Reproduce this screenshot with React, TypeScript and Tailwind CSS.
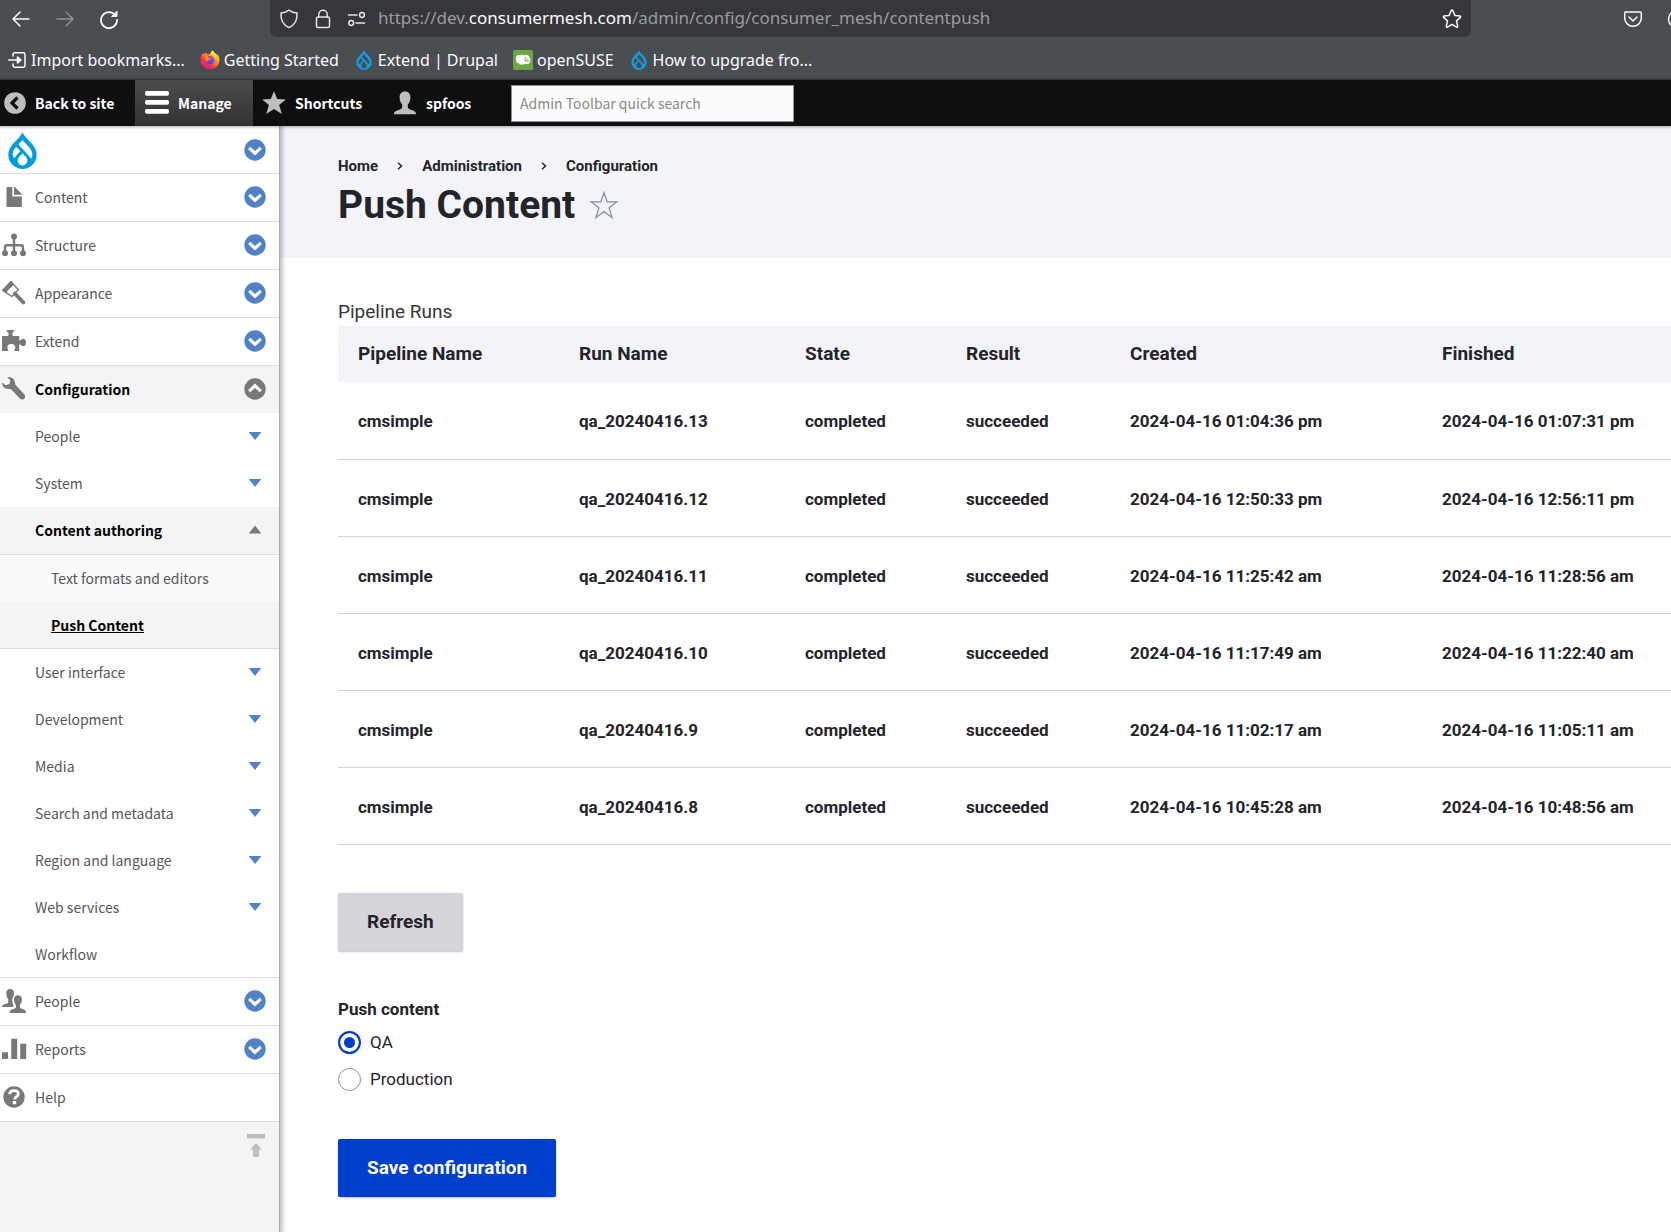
import { useState, type ReactNode } from "react";
import { SiDrupal } from "react-icons/si";

const UI_FONT = "font-['Noto_Sans',sans-serif]";
const TRAY_FONT = "font-['Noto_Sans_CJK_SC',sans-serif]";
const PAGE_FONT = "font-['Roboto',sans-serif]";

type IconName =
  | "content"
  | "structure"
  | "appearance"
  | "extend"
  | "configuration"
  | "people"
  | "reports"
  | "help";

type Toggle = "circle" | "circleOpen" | "arrow" | "arrowOpen" | "none";

type MenuItem = {
  id: string;
  label: string;
  icon?: IconName;
  level: 1 | 2 | 3;
  toggle: Toggle;
  active?: boolean;
  lastOfGroup?: boolean;
};

const MENU: MenuItem[] = [
  { id: "content", label: "Content", icon: "content", level: 1, toggle: "circle" },
  { id: "structure", label: "Structure", icon: "structure", level: 1, toggle: "circle" },
  { id: "appearance", label: "Appearance", icon: "appearance", level: 1, toggle: "circle" },
  { id: "extend", label: "Extend", icon: "extend", level: 1, toggle: "circle" },
  { id: "config", label: "Configuration", icon: "configuration", level: 1, toggle: "circleOpen", active: true },
  { id: "config-people", label: "People", level: 2, toggle: "arrow" },
  { id: "system", label: "System", level: 2, toggle: "arrow" },
  { id: "authoring", label: "Content authoring", level: 2, toggle: "arrowOpen", active: true },
  { id: "formats", label: "Text formats and editors", level: 3, toggle: "none" },
  { id: "push", label: "Push Content", level: 3, toggle: "none", active: true, lastOfGroup: true },
  { id: "ui", label: "User interface", level: 2, toggle: "arrow" },
  { id: "development", label: "Development", level: 2, toggle: "arrow" },
  { id: "media", label: "Media", level: 2, toggle: "arrow" },
  { id: "search", label: "Search and metadata", level: 2, toggle: "arrow" },
  { id: "region", label: "Region and language", level: 2, toggle: "arrow" },
  { id: "services", label: "Web services", level: 2, toggle: "arrow" },
  { id: "workflow", label: "Workflow", level: 2, toggle: "none", lastOfGroup: true },
  { id: "people", label: "People", icon: "people", level: 1, toggle: "circle" },
  { id: "reports", label: "Reports", icon: "reports", level: 1, toggle: "circle" },
  { id: "help", label: "Help", icon: "help", level: 1, toggle: "none" },
];

const RUNS = [
  { run: "qa_20240416.13", created: "2024-04-16 01:04:36 pm", finished: "2024-04-16 01:07:31 pm" },
  { run: "qa_20240416.12", created: "2024-04-16 12:50:33 pm", finished: "2024-04-16 12:56:11 pm" },
  { run: "qa_20240416.11", created: "2024-04-16 11:25:42 am", finished: "2024-04-16 11:28:56 am" },
  { run: "qa_20240416.10", created: "2024-04-16 11:17:49 am", finished: "2024-04-16 11:22:40 am" },
  { run: "qa_20240416.9", created: "2024-04-16 11:02:17 am", finished: "2024-04-16 11:05:11 am" },
  { run: "qa_20240416.8", created: "2024-04-16 10:45:28 am", finished: "2024-04-16 10:48:56 am" },
];

function Line({ children, className = "size-5", width = 1.5 }: { children: ReactNode; className?: string; width?: number }) {
  return (
    <svg
      viewBox="0 0 20 20"
      fill="none"
      stroke="currentColor"
      strokeWidth={width}
      strokeLinecap="round"
      strokeLinejoin="round"
      aria-hidden="true"
      className={`shrink-0 ${className}`}
    >
      {children}
    </svg>
  );
}

function FirefoxLogo() {
  return (
    <svg viewBox="0 0 20 20" aria-hidden="true" className="size-5 shrink-0">
      <defs>
        <linearGradient id="fx-body" x1="0.85" y1="0.1" x2="0.2" y2="0.95">
          <stop offset="0" stopColor="#fff44f" />
          <stop offset="0.35" stopColor="#ff980e" />
          <stop offset="0.7" stopColor="#ff3647" />
          <stop offset="1" stopColor="#e31587" />
        </linearGradient>
        <linearGradient id="fx-globe" x1="0.8" y1="0" x2="0.2" y2="1">
          <stop offset="0" stopColor="#a04bdb" />
          <stop offset="1" stopColor="#5b3fc4" />
        </linearGradient>
      </defs>
      <path
        fill="url(#fx-body)"
        d="M12.8.4c-1.600 1-2.200 2.400-2.300 3.600-1-.1-1.900.1-2.700.5-1-.4-1.500-1.300-1.600-1.900-.9.4-1.500 1-1.900 1.600-.7-.2-1-.7-1-1.500C1.600 4.300.7 6.700.6 9.200c-.3 5.500 4 10 9.400 10s9.500-4.200 9.500-9.500c0-2.300-1-4.600-2.300-5.700.3.800.4 1.400.4 2-.9-2.200-3.700-3.300-4.800-5.600z"
      />
      <circle cx="10.200" cy="10.200" r="4.300" fill="url(#fx-globe)" />
      <path fill="#ff8a16" d="M4.600 6.600c2-.4 3.400.1 4.200 1.300 1.100-.1 1.900.1 2.300.6-.4 1-1.600 1-2.500 1.500-.8.4-.6 1.400-.2 2-2.300-.3-3.800-2.700-3.800-5.400z" />
      <path fill="#ffe14a" d="M12.800.4c-1.600 1-2.200 2.400-2.300 3.600 2.500.1 4.600 1.800 5 4.300.5-.7.700-1.500.7-2.300C15.300 3.800 13.600 2.400 12.800.4z" />
    </svg>
  );
}

function SuseLogo() {
  return (
    <svg viewBox="0 0 20 20" aria-hidden="true" className="size-5 shrink-0">
      <rect width="20" height="20" rx="1.500" fill="#6da741" />
      <path fill="#fff" d="M3 7.200C3.500 5.200 5.500 4.600 8 4.700c2 .1 3 .4 4.500.9L12 4.200c2.300.7 5 2 5.400 4.700.3 2-.2 3.500-.9 4.400-.8.900-3 .8-4.300.5-.9.700-1.700 1.100-2.700.6H6.600c-.5-.4-.8-.8-.7-1.400H4c-.8-1.800-1.400-4-1-5.800z" />
      <path fill="none" stroke="#6da741" strokeWidth="0.900" d="M16.800 10.800c-2.200.9-4.300.7-5.300-.3M13.200 7.200a1.500 1.500 0 1 0 1.600 1.600" />
    </svg>
  );
}

function BrowserChrome() {
  return (
    <header className={`${UI_FONT} border-b border-[#404345] bg-[#4a4d51] text-[#fbfbfe]`}>
      <div className="flex h-[37px] items-center">
        <div className="flex w-[270px] shrink-0 items-center gap-6 pl-[11px]">
          <button type="button" aria-label="Back">
            <Line>
              <path d="M18 10H2M9 3 2 10l7 7" />
            </Line>
          </button>
          <button type="button" aria-label="Forward" disabled className="text-[#8d8f92]">
            <Line>
              <path d="M2 10h16M11 3l7 7-7 7" />
            </Line>
          </button>
          <button type="button" aria-label="Reload">
            <Line width={1.8}>
              <path d="M16.500 6.500A8 8 0 1 0 18 11" />
              <path d="M18 2.500v5h-5z" fill="currentColor" strokeWidth={1} />
            </Line>
          </button>
        </div>
        <div className="flex h-full min-w-0 flex-1 items-center rounded-b-md bg-[#36373b] pr-[9px] pl-[9px]">
          <div className="flex shrink-0 items-center gap-[14px] pr-[11px] text-[#e4e4e7]">
            <Line>
              <path d="M10 1.200c2.300 1.700 5 2.700 8 2.900.5 6.600-2.500 12-8 14.500C4.500 16.100 1.500 10.700 2 4.100c3-.2 5.700-1.200 8-2.900z" />
            </Line>
            <Line>
              <rect x="3.500" y="8" width="13" height="10.500" rx="1.500" />
              <path d="M5.800 8V5.500a4.200 4.200 0 0 1 8.400 0V8" />
            </Line>
            <Line>
              <path d="M1.500 6h8.500M9 14h8.500" />
              <circle cx="15" cy="6" r="2.400" />
              <circle cx="4.200" cy="14" r="2.400" />
            </Line>
          </div>
          <div
            role="textbox"
            aria-label="Address"
            className="min-w-0 flex-1 truncate pb-0.5 text-[17px] leading-6 text-[#9b9b9f]"
          >
            https://dev.<span className="text-[#fbfbfe]">consumermesh.com</span>/admin/config/consumer_mesh/contentpush
          </div>
          <button type="button" aria-label="Bookmark this page">
            <Line>
              <path d="M9.200 1.600c.3-.7 1.300-.7 1.600 0l2.100 4.800 5 .5c.8.1 1.100 1 .5 1.500l-3.900 3.500 1.200 5.300c.2.800-.6 1.300-1.200.9L10 15.400l-4.500 2.700c-.7.400-1.400-.1-1.200-.9l1.200-5.300-3.900-3.500c-.6-.5-.3-1.400.5-1.500l5-.5z" />
            </Line>
          </button>
        </div>
        <div className="flex w-[200px] shrink-0 items-center gap-6 overflow-hidden pl-[152px]">
          <button type="button" aria-label="Save to Pocket">
            <Line>
              <path d="M2.500 3h15c.5 0 .8.400.8.900V9a8.300 8.300 0 0 1-16.600 0V3.900c0-.5.300-.9.800-.9z" />
              <path d="M6 8l4 4 4-4" />
            </Line>
          </button>
          <button type="button" aria-label="Account">
            <Line>
              <circle cx="10" cy="10" r="8.500" />
            </Line>
          </button>
        </div>
      </div>
      <nav aria-label="Bookmarks" className="flex h-[42px] items-center gap-[15px] pt-1 pl-2 text-base leading-6">
        <a href="#import" className="flex items-center gap-[3px]">
          <Line>
            <path d="M5 6V4.500C5 3.500 5.700 2.800 6.700 2.800h8.600c1 0 1.700.7 1.700 1.700v11c0 1-.7 1.700-1.700 1.700H6.700c-1 0-1.700-.7-1.700-1.700V14M.8 10H12" />
            <path d="M9.500 7l3.500 3-3.500 3z" fill="currentColor" />
          </Line>
          Import bookmarks...
        </a>
        <a href="#started" className="flex items-center gap-1">
          <FirefoxLogo />
          Getting Started
        </a>
        <a href="#extend" className="flex items-center gap-1">
          <SiDrupal aria-hidden="true" className="size-5 text-[#0d9de0]" />
          Extend | Drupal
        </a>
        <a href="#opensuse" className="flex items-center gap-1">
          <SuseLogo />
          openSUSE
        </a>
        <a href="#upgrade" className="flex items-center gap-1">
          <SiDrupal aria-hidden="true" className="size-5 text-[#0d9de0]" />
          How to upgrade fro...
        </a>
      </nav>
    </header>
  );
}

function AdminToolbar() {
  const item = "flex h-full items-center text-white";
  return (
    <nav
      aria-label="Toolbar"
      className={`${TRAY_FONT} relative z-20 flex h-[46px] items-center bg-[#0f0f0f] text-sm font-bold shadow-[0_0_3px_1px_rgba(0,0,0,0.33)]`}
    >
      <a href="#site" className={`${item} w-[135px] gap-[9px] pl-1`}>
        <svg viewBox="0 0 22 22" aria-hidden="true" className="size-[22px] shrink-0">
          <circle cx="11" cy="11" r="10.800" fill="#bebebe" />
          <path d="M13.500 5.500 8 11l5.500 5.500" fill="none" stroke="#0f0f0f" strokeWidth="3.200" />
        </svg>
        Back to site
      </a>
      <a href="#manage" className={`${item} w-[118px] gap-[9px] bg-linear-to-b from-[#4c4c4c] to-[#333] pl-[10px]`}>
        <svg viewBox="0 0 24 24" aria-hidden="true" className="size-6 shrink-0" fill="#fff">
          <rect y="0" width="24" height="4.800" rx="1.800" />
          <rect y="9" width="24" height="4.800" rx="1.800" />
          <rect y="18" width="24" height="4.800" rx="1.800" />
        </svg>
        Manage
      </a>
      <a href="#shortcuts" className={`${item} w-[130px] gap-[9px] pl-[9px]`}>
        <svg viewBox="0 0 24 24" aria-hidden="true" className="size-6 shrink-0" fill="#bebebe">
          <path d="m12 .2 3.200 7.800 8.600.5-6.700 5.500 2.700 9L12 18.100l-7.800 4.900 2.700-9L.2 8.500 8.800 8z" />
        </svg>
        Shortcuts
      </a>
      <a href="#user" className={`${item} w-[128px] gap-[9px] pl-[10px]`}>
        <svg viewBox="0 0 24 24" aria-hidden="true" className="size-6 shrink-0" fill="#bebebe">
          <path d="M12 .5c3.600 0 5.400 2.300 5.400 5.800 0 3-1 5.600-2.600 7.200v2.700c0 1.400 1.400 2 3.900 2.800 2.700.9 4.300 1.900 4.300 3.500v.8H1v-.8c0-1.600 1.600-2.600 4.300-3.500 2.500-.8 3.900-1.400 3.900-2.800v-2.700C7.600 11.900 6.600 9.300 6.600 6.300 6.600 2.800 8.400.5 12 .5z" />
        </svg>
        spfoos
      </a>
      <input
        type="search"
        aria-label="Admin Toolbar quick search"
        placeholder="Admin Toolbar quick search"
        className="h-[37px] w-[283px] border border-[#8f8f9d] bg-[#fcfcfa] px-2 font-normal text-black placeholder:text-[#8a8a8a]"
      />
    </nav>
  );
}

function MenuIcon({ name }: { name: IconName }) {
  const shapes: Record<IconName, ReactNode> = {
    content: (
      <path d="M4.500 2h5.800v9.500h9.500V22H4.500zM12 2h.8l7 7v.800H12z" />
    ),
    structure: (
      <>
        <circle cx="12" cy="3.500" r="3" />
        <circle cx="3" cy="20.300" r="3" />
        <circle cx="12" cy="20.300" r="3" />
        <circle cx="21" cy="20.300" r="3" />
        <path d="M12 3v17M3 20v-5.500c0-1.500.8-2.200 2.200-2.200h13.600c1.400 0 2.200.7 2.200 2.200V20" fill="none" stroke="currentColor" strokeWidth="2.400" />
      </>
    ),
    appearance: (
      <>
        <path d="M9 .8 16.300 8.800 9.800 15.500.8 9.300z" fill="none" stroke="currentColor" strokeWidth="1.400" strokeLinejoin="round" />
        <path d="M9 0 0 9.300l4.500 3.200C5.300 8.500 9 7.300 10.300 5.300c.6-.9.900-1.900 1-2.800z" />
        <path d="m12.800 12.500 8.700 9" fill="none" stroke="currentColor" strokeWidth="3.800" strokeLinecap="round" />
      </>
    ),
    extend: (
      <path d="M4.500 1h7.500c.3 1.800-1.800 2.200-1.800 3.800 0 1 .4 1.700.8 2.200h6.200v4.500c1.600.6 2.300-1.800 4.300-1.800 1.400 0 2.500 1.800 2.500 3.800s-1.100 3.800-2.500 3.800c-2 0-2.700-2.400-4.300-1.800V22h-4.700c-.8-1 .8-2 .8-3.800 0-2-1.800-3.200-4-3.200s-4 1.200-4 3.200C5.300 20 7 21 6.200 22H0V7h6c.4-.5.700-1.200.7-2.200C6.700 3.200 4.200 2.800 4.500 1z" />
    ),
    configuration: (
      <path d="M5.200.6c3.600-1 7.200 1 7.800 4.700.2 1.300.1 2 .6 2.700l8.800 9.400c1.200 1.400.9 3.300-.2 4.400-1.200 1.100-3 1.100-4.300-.2l-8.700-9c-.7-.7-1.500-.6-2.700-.6C2.900 11.900 0 9.300 0 5.500L3.700 8.300 7.500 7l.9-3.800z" />
    ),
    people: (
      <>
        <path d="M8.200 0c2.600 0 3.900 1.700 3.900 4.300 0 1-.2 1.900-.5 2.700-1.200 1.300-1.600 3.600-1.200 5.900.3 1.800 1 3 1.700 4L9.500 18H0c0-1.500 1-2.300 3-2.900 2-.6 3.200-1 3.200-2.200V10C5 8.800 4.300 6.800 4.300 4.500 4.300 1.700 5.600 0 8.200 0z" />
        <path d="M15.900 6.200c2.600 0 4 1.700 4 4.400 0 2.300-.8 4.200-2 5.400v2c0 1.200 1 1.700 3 2.300 1.900.6 3.100 1.300 3.100 2.900v.8H7.800v-.8c0-1.600 1.200-2.300 3.100-2.900 2-.6 3-1.100 3-2.300v-2c-1.200-1.200-2-3.100-2-5.400 0-2.700 1.400-4.400 4-4.400z" />
      </>
    ),
    reports: (
      <path d="M0 15.200h6V22H0zM9.200 1.800h6V22h-6zM18.200 6.800h6V22h-6z" />
    ),
    help: (
      <>
        <circle cx="12" cy="12" r="10.700" />
        <path d="M7.700 9.300C7.700 7 9.300 5.700 12 5.700s4.300 1.300 4.300 3.400c0 2.500-3.600 2.700-3.600 5.300" fill="none" stroke="#fff" strokeWidth="2.800" />
        <path d="M10.800 16h3.400v3.200h-3.400z" fill="#fff" />
      </>
    ),
  };
  return (
    <svg viewBox="0 0 24 24" aria-hidden="true" fill="currentColor" className="size-6 shrink-0 overflow-visible text-[#787878]">
      {shapes[name]}
    </svg>
  );
}

function ToggleIcon({ kind }: { kind: Toggle }) {
  if (kind === "circle" || kind === "circleOpen") {
    const open = kind === "circleOpen";
    return (
      <svg viewBox="0 0 22 22" aria-hidden="true" className="size-[22px]">
        <circle cx="11" cy="11" r="10.700" fill={open ? "#787878" : "#5181c6"} />
        <path d={open ? "m5.200 13.200 5.800-5.400 5.800 5.400" : "m5.200 8.800 5.800 5.400 5.800-5.400"} fill="none" stroke="#fff" strokeWidth="3.200" />
      </svg>
    );
  }
  return (
    <svg viewBox="0 0 22 22" aria-hidden="true" className="size-[22px]">
      {kind === "arrowOpen" ? <path d="M11 6.500l6.300 8H4.700z" fill="#787878" /> : <path d="M4.700 7h12.600L11 15z" fill="#5181c6" />}
    </svg>
  );
}

function rowClass(item: MenuItem) {
  if (item.level === 1) {
    return item.active ? "h-[47px] bg-[#f4f4f4]" : "h-12 border-b border-[#ddd] bg-white";
  }
  if (item.level === 3) {
    return item.active ? "h-[47px] border-b border-[#ddd] bg-[#f4f4f4]" : "h-[47px] bg-[#fafafa]";
  }
  if (item.active) return "h-12 border-b border-[#ddd] bg-[#f4f4f4]";
  return item.lastOfGroup ? "h-[47px] border-b border-[#ddd] bg-white" : "h-[47px] bg-white";
}

function labelClass(item: MenuItem) {
  if (item.level === 3) {
    return item.active ? "pl-[51px] font-bold text-black underline" : "pl-[51px] text-[#565656]";
  }
  return item.active ? "font-bold text-black" : "text-[#565656]";
}

function AdminTray() {
  return (
    <aside className={`${TRAY_FONT} relative z-10 w-[280px] shrink-0 border-r border-[#aaa] bg-[#f4f4f4] text-sm shadow-[0_0_5px_2px_rgba(0,0,0,0.3)]`}>
      <ul>
        <li className="flex h-12 items-center justify-between border-b border-[#ddd] bg-white pr-[13px]">
          <a href="#tools" aria-label="Tools" className="pt-0.5 pl-1">
            <SiDrupal aria-hidden="true" className="size-[37px] text-[#009cde]" />
          </a>
          <button type="button" aria-label="Extend Tools">
            <ToggleIcon kind="circle" />
          </button>
        </li>
        {MENU.map((item) => (
          <li key={item.id} className={`flex items-center justify-between pr-[13px] pb-px ${rowClass(item)}`}>
            <a href={`#${item.id}`} className="flex items-center">
              {item.level < 3 ? <span className="flex w-[35px] shrink-0 pl-[2px]">{item.icon ? <MenuIcon name={item.icon} /> : null}</span> : null}
              <span className={labelClass(item)}>{item.label}</span>
            </a>
            {item.toggle !== "none" ? (
              <button type="button" aria-label={`Toggle ${item.label}`}>
                <ToggleIcon kind={item.toggle} />
              </button>
            ) : null}
          </li>
        ))}
      </ul>
      <div className="flex justify-end pt-3 pr-[14px]">
        <button type="button" aria-label="Horizontal orientation">
          <svg viewBox="0 0 18 24" aria-hidden="true" className="h-6 w-[18px]" fill="#bebebe">
            <path d="M0 0h18v4.500H0zM9 9l6 6.500h-3V23H6v-7.500H3z" />
          </svg>
        </button>
      </div>
    </aside>
  );
}

function Separator() {
  return (
    <svg viewBox="0 0 6 8" aria-hidden="true" className="h-2 w-[6px]" fill="none" stroke="#232429" strokeWidth="1.500">
      <path d="m1 .8 3.500 3.200L1 7.200" />
    </svg>
  );
}

const RADIO_CLS =
  "size-[23px] appearance-none rounded-full border border-[#8e929c] bg-white checked:border-2 checked:border-[#003ecc] checked:bg-[#003ecc] checked:shadow-[inset_0_0_0_4px_#fff]";

function PushContentPage() {
  const [target, setTarget] = useState("qa");

  return (
    <main className={`${PAGE_FONT} min-w-0 flex-1 overflow-hidden bg-white text-[#232429]`}>
      <div className="h-[132px] bg-[#f3f4f9] pt-[29px] pl-[58px]">
        <nav aria-label="Breadcrumb" className="flex items-center gap-[19px] text-[15px] leading-[22px] font-bold">
          <a href="#home">Home</a>
          <Separator />
          <a href="#administration">Administration</a>
          <Separator />
          <a href="#configuration">Configuration</a>
        </nav>
        <div className="flex items-center gap-[14px] pt-[3px]">
          <h1 className="text-[39px] leading-[50px] font-bold">Push Content</h1>
          <button type="button" aria-label="Add to shortcuts">
            <svg viewBox="0 0 30 30" aria-hidden="true" className="size-[30px]" fill="none" stroke="#8e929c" strokeWidth="1.300">
              <path d="m15 2.500 3.100 9.300h9.800l-7.900 5.900 3.100 9.800-8.100-5.900-8.100 5.900 3.100-9.800-7.900-5.900h9.800z" />
            </svg>
          </button>
        </div>
      </div>

      <form className="pt-10 pb-9 pl-[58px]" onSubmit={(event) => event.preventDefault()}>
        <table className="w-full min-w-[1333px] table-fixed border-collapse text-left">
          <caption className="h-7 text-left text-[19px] leading-7 text-[#33353b]">Pipeline Runs</caption>
          <colgroup>
            <col className="w-[221px]" />
            <col className="w-[226px]" />
            <col className="w-[161px]" />
            <col className="w-[164px]" />
            <col className="w-[312px]" />
            <col />
          </colgroup>
          <thead>
            <tr className="h-14 bg-[#f3f4f9] text-[19px] leading-6">
              <th scope="col" className="pl-5 font-bold">Pipeline Name</th>
              <th scope="col" className="pl-5 font-bold">Run Name</th>
              <th scope="col" className="pl-5 font-bold">State</th>
              <th scope="col" className="pl-5 font-bold">Result</th>
              <th scope="col" className="pl-5 font-bold">Created</th>
              <th scope="col" className="pl-5 font-bold">Finished</th>
            </tr>
          </thead>
          <tbody>
            {RUNS.map((row) => (
              <tr key={row.run} className="h-[77px] border-b border-[#d3d4d9] text-[17px] leading-6 font-bold">
                <td className="pt-0.5 pl-5">cmsimple</td>
                <td className="pt-0.5 pl-5">{row.run}</td>
                <td className="pt-0.5 pl-5">completed</td>
                <td className="pt-0.5 pl-5">succeeded</td>
                <td className="pt-0.5 pl-5">{row.created}</td>
                <td className="pt-0.5 pl-5">{row.finished}</td>
              </tr>
            ))}
          </tbody>
        </table>

        <button type="button" className="mt-12 flex h-[58px] items-center rounded-xs bg-[#d4d4da] px-[29px] text-[19px] leading-6 font-bold shadow-[0_1px_2px_rgba(0,0,0,0.25)]">
          Refresh
        </button>

        <fieldset className="pt-[46px] text-[17px] leading-6">
          <legend className="float-left mb-px w-full font-bold">Push content</legend>
          <label className="flex h-[37px] w-fit clear-both items-center gap-[9px] pt-1">
            <input
              type="radio"
              name="target"
              value="qa"
              checked={target === "qa"}
              onChange={() => setTarget("qa")}
              className={RADIO_CLS}
            />
            QA
          </label>
          <label className="flex h-[37px] w-fit items-center gap-[9px] pt-1">
            <input
              type="radio"
              name="target"
              value="production"
              checked={target === "production"}
              onChange={() => setTarget("production")}
              className={RADIO_CLS}
            />
            Production
          </label>
        </fieldset>

        <button type="submit" className="mt-[43px] flex h-[58px] items-center rounded-xs bg-[#003ecc] px-[29px] text-[19px] leading-6 font-bold text-white shadow-[0_1px_2px_rgba(0,0,0,0.25)]">
          Save configuration
        </button>
      </form>
    </main>
  );
}

export default function App() {
  return (
    <div className="flex min-h-screen flex-col overflow-hidden">
      <BrowserChrome />
      <AdminToolbar />
      <div className="flex flex-1">
        <AdminTray />
        <PushContentPage />
      </div>
    </div>
  );
}
